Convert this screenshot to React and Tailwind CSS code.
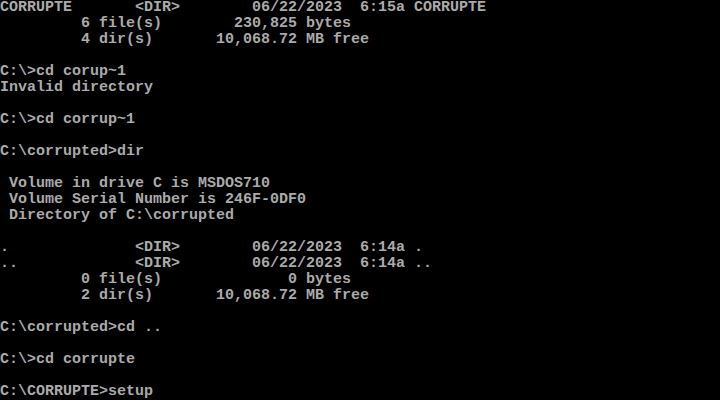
const lines = [
  "CORRUPTE       <DIR>        06/22/2023  6:15a CORRUPTE",
  "         6 file(s)        230,825 bytes",
  "         4 dir(s)       10,068.72 MB free",
  "",
  "C:\\>cd corup~1",
  "Invalid directory",
  "",
  "C:\\>cd corrup~1",
  "",
  "C:\\corrupted>dir",
  "",
  " Volume in drive C is MSDOS710",
  " Volume Serial Number is 246F-0DF0",
  " Directory of C:\\corrupted",
  "",
  ".              <DIR>        06/22/2023  6:14a .",
  "..             <DIR>        06/22/2023  6:14a ..",
  "         0 file(s)              0 bytes",
  "         2 dir(s)       10,068.72 MB free",
  "",
  "C:\\corrupted>cd ..",
  "",
  "C:\\>cd corrupte",
  "",
  "C:\\CORRUPTE>setup",
];

export default function App() {
  return (
    <div className="w-[720px] h-[400px] bg-black overflow-hidden">
      <div className="flex flex-col font-['Liberation_Mono',monospace] text-[15px] leading-4 text-[#aaaaaa] font-bold">
        {lines.map((l, i) => (
          <div key={i} className="h-4 whitespace-pre">
            {l}
          </div>
        ))}
      </div>
    </div>
  );
}
